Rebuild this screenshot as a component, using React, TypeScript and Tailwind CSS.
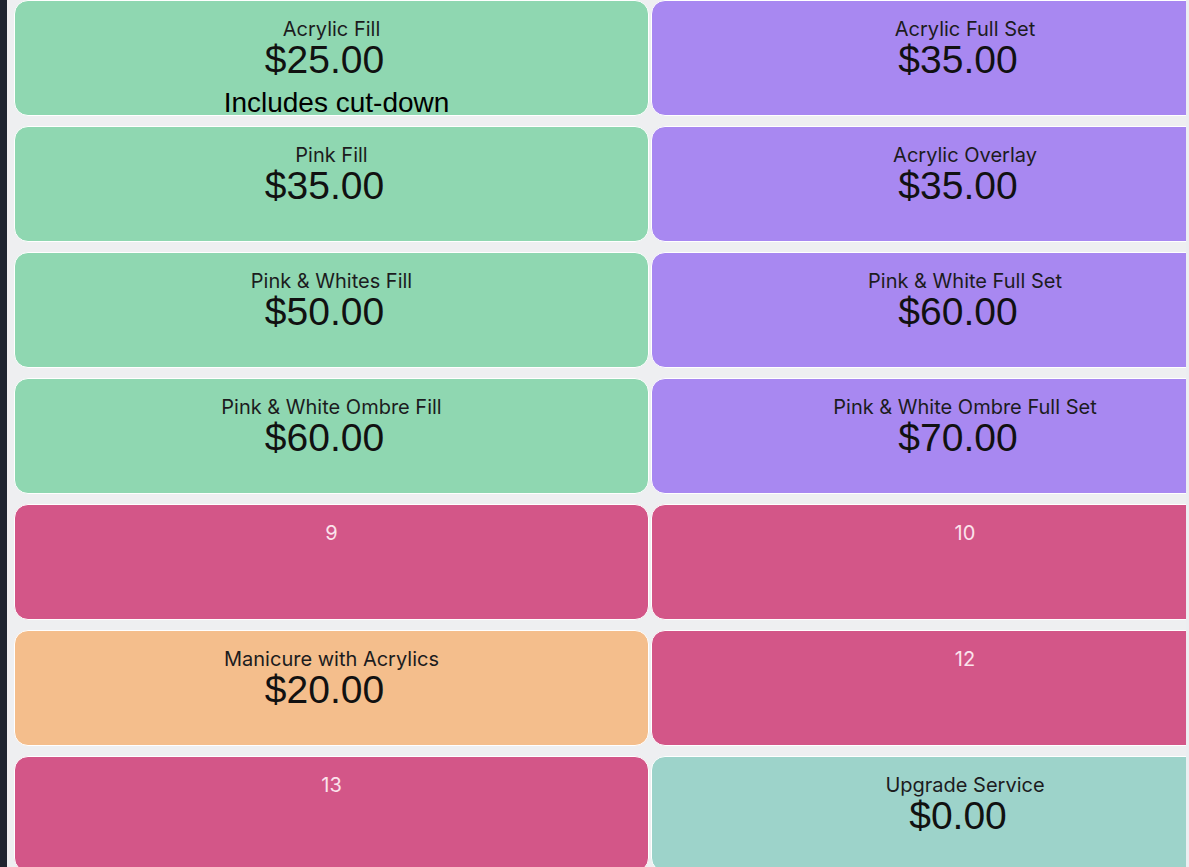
import React from 'react';

type Tile = {
  title: string;
  price?: string;
  note?: string;
  color: string;
};

const tiles: Tile[] = [
  { title: 'Acrylic Fill', price: '$25.00', note: 'Includes cut-down', color: 'bg-[#8fd7b1]' },
  { title: 'Acrylic Full Set', price: '$35.00', color: 'bg-[#a888f1]' },
  { title: 'Pink Fill', price: '$35.00', color: 'bg-[#8fd7b1]' },
  { title: 'Acrylic Overlay', price: '$35.00', color: 'bg-[#a888f1]' },
  { title: 'Pink & Whites Fill', price: '$50.00', color: 'bg-[#8fd7b1]' },
  { title: 'Pink & White Full Set', price: '$60.00', color: 'bg-[#a888f1]' },
  { title: 'Pink & White Ombre Fill', price: '$60.00', color: 'bg-[#8fd7b1]' },
  { title: 'Pink & White Ombre Full Set', price: '$70.00', color: 'bg-[#a888f1]' },
  { title: '9', color: 'bg-[#d35688]' },
  { title: '10', color: 'bg-[#d35688]' },
  { title: 'Manicure with Acrylics', price: '$20.00', color: 'bg-[#f4be8c]' },
  { title: '12', color: 'bg-[#d35688]' },
  { title: '13', color: 'bg-[#d35688]' },
  { title: 'Upgrade Service', price: '$0.00', color: 'bg-[#9dd3ca]' },
];

function ServiceTile({ tile }: { tile: Tile }) {
  const empty = !tile.price;
  return (
    <button
      className={`h-[116px] ${tile.color} border border-white rounded-[14px] flex flex-col items-center pt-[18px] text-center overflow-hidden`}
    >
      <span
        className={`font-['Inter',sans-serif] text-[20px] leading-[21px] ${
          empty ? 'text-[#fbe3ec]' : 'text-[#1c1c1e]'
        }`}
      >
        {tile.title}
      </span>
      {tile.price && (
        <span className="font-['Liberation_Sans',Arial,sans-serif] text-[39px] leading-[40px] text-[#111] -ml-[14px]">
          {tile.price}
        </span>
      )}
      {tile.note && (
        <span className="mt-[10px] font-['Liberation_Sans',Arial,sans-serif] text-[28px] leading-[26px] text-black ml-[10px]">
          {tile.note}
        </span>
      )}
    </button>
  );
}

export default function App() {
  return (
    <div className="h-screen w-full flex overflow-hidden bg-[#eeeff1]">
      {/* Sidebar edge */}
      <div className="w-[7px] shrink-0 bg-[#1e2430]" />

      <div className="flex-1 overflow-hidden pl-[7px]">
        <div className="grid grid-cols-[635px_628px] gap-x-[2px] gap-y-[10px] w-[1265px]">
          {tiles.map((t) => (
            <ServiceTile key={t.title} tile={t} />
          ))}
        </div>
      </div>

      {/* Scroll edge */}
      <div className="w-[3px] shrink-0 bg-[#eceef1]" />
    </div>
  );
}
